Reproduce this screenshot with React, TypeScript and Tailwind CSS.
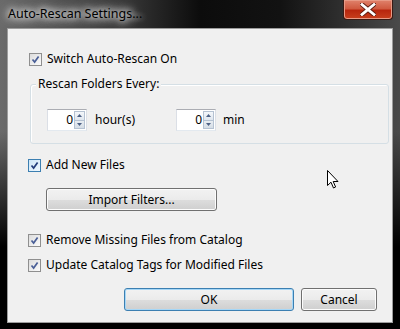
import React from 'react';

const font = { fontFamily: '"Noto Sans", "Open Sans", sans-serif' };

// Win7 style checkbox
const CheckBox: React.FC<{ hot?: boolean }> = ({ hot }) => (
    <div className={`w-[13px] h-[13px] border flex-shrink-0 flex items-center justify-center ${hot ? 'border-[#3c7fb1] bg-[linear-gradient(135deg,#cde6f7,#f0f8fe)]' : 'border-[#8f8f8f] bg-[linear-gradient(135deg,#dcdcdc,#fbfbfb)]'}`}>
        <svg width="9" height="9" viewBox="0 0 9 9">
            <path d="M1.5 4.5 L3.6 7 L7.6 1.5" fill="none" stroke={hot ? '#233d7a' : '#4a5f97'} strokeWidth="1.7" />
        </svg>
    </div>
);

const Row: React.FC<{ label: string; hot?: boolean; className?: string }> = ({ label, hot, className }) => (
    <div className={`flex items-center gap-[5px] h-[16px] ${className ?? ''}`}>
        <CheckBox hot={hot} />
        <span className="text-[12px] leading-none text-black">{label}</span>
    </div>
);

const Spinner: React.FC = () => (
    <div className="w-[40px] h-[22px] bg-white border border-[#abadb3] border-b-[#e3e9ef] border-x-[#dbdfe6] flex items-stretch">
        <span className="flex-1 text-right text-[12px] leading-[20px] pr-[1px]">0</span>
        <div className="w-[12px] flex flex-col py-[1px] pr-[1px] gap-0">
            <div className="flex-1 border border-[#b5c2d2] bg-[linear-gradient(#f4f7fa,#dfe6ee)] flex items-center justify-center">
                <svg width="5" height="3" viewBox="0 0 5 3"><path d="M0 3 L2.5 0 L5 3 Z" fill="#4d6185" /></svg>
            </div>
            <div className="flex-1 border border-[#b5c2d2] border-t-0 bg-[linear-gradient(#e8edf2,#d5dde6)] flex items-center justify-center">
                <svg width="5" height="3" viewBox="0 0 5 3"><path d="M0 0 L2.5 3 L5 0 Z" fill="#4d6185" /></svg>
            </div>
        </div>
    </div>
);

const Button: React.FC<{ label: string; w: string; def?: boolean }> = ({ label, w, def }) => (
    <div className={`${w} h-[23px] rounded-[3px] border flex items-center justify-center text-[12px] text-black ${def ? 'border-[#3c7fb1] shadow-[inset_0_0_0_1px_#a6d7f7] bg-[linear-gradient(#f2f2f2_0%,#ebebeb_50%,#dddddd_51%,#cfcfcf_100%)]' : 'border-[#707070] shadow-[inset_0_0_0_1px_#fcfcfc] bg-[linear-gradient(#f2f2f2_0%,#ebebeb_50%,#dddddd_51%,#cfcfcf_100%)]'}`}>
        {label}
    </div>
);

export default function App() {
    return (
        <div className="w-[400px] h-[329px] relative flex flex-col px-[7px] pb-[6px] bg-[linear-gradient(90deg,#6a6a6a_0%,#3a3a3a_30%,#0c0c0c_50%,#121212_70%,#4a4a4a_100%)]" style={font}>
            <div className="absolute inset-0 bg-[linear-gradient(180deg,transparent_0%,transparent_40%,#000_75%)] pointer-events-none" />
            {/* title bar */}
            <div className="h-[28px] flex items-start relative">
                <span className="mt-[6px] ml-[1px] text-[12.5px] leading-[16px] text-black [text-shadow:0_0_6px_#fff,0_0_10px_#fff,0_0_14px_#eee]">
                    Auto-Rescan Settings...
                </span>
                <div className="ml-auto w-[50px] h-[20px] rounded-b-[4px] border border-[#3a1a14] border-t-0 shadow-[inset_0_0_0_1px_#e89a86] bg-[linear-gradient(#e0826c_0%,#d05a40_45%,#b8260e_55%,#c8401e_100%)] flex items-center justify-center">
                    <svg width="16" height="13" viewBox="0 0 16 13">
                        <path d="M2 1.5 L14 11.5 M14 1.5 L2 11.5" stroke="#5a1a10" strokeWidth="4.6" strokeLinecap="square" />
                        <path d="M2 1.5 L14 11.5 M14 1.5 L2 11.5" stroke="#fff" strokeWidth="2.8" strokeLinecap="square" />
                    </svg>
                </div>
            </div>

            {/* client area */}
            <div className="flex-1 relative border border-[#9c9c9c] bg-[#f0f0f0] pl-[20px] flex flex-col">
                <Row label="Switch Auto-Rescan On" className="mt-[22px] ml-[1px]" />

                <div className="relative mt-[17px] ml-[2px] w-[359px] h-[60px] rounded-[3px] border border-[#d5dfe5] shadow-[inset_1px_1px_0_#fff] pl-[16px] pt-[24px]">
                    <span className="absolute left-[5px] top-[-9px] px-[2px] bg-[#f0f0f0] text-[12px] leading-[16px] text-black">Rescan Folders Every:</span>
                    <div className="flex items-center">
                        <div className="w-[129px] flex items-center gap-[8px]">
                            <Spinner />
                            <span className="text-[12px] leading-none">hour(s)</span>
                        </div>
                        <div className="flex items-center gap-[7px]">
                            <Spinner />
                            <span className="text-[12px] leading-none">min</span>
                        </div>
                    </div>
                </div>

                <Row label="Add New Files" hot className="mt-[13px]" />

                <div className="mt-[15px] ml-[18px]">
                    <Button label="Import Filters..." w="w-[171px]" />
                </div>

                <Row label="Remove Missing Files from Catalog" className="mt-[21px]" />
                <Row label="Update Catalog Tags for Modified Files" className="mt-[9px]" />

                <div className="mt-[15px] flex justify-end gap-[7px] pr-[15px]">
                    <Button label="OK" w="w-[170px]" def />
                    <Button label="Cancel" w="w-[76px]" />
                </div>
            </div>

            {/* mouse cursor */}
            <svg className="absolute left-[327px] top-[170px]" width="12" height="19" viewBox="0 0 12 19">
                <path d="M0.5 0.5 L0.5 15.5 L4 12.2 L6.5 18 L8.6 17 L6.2 11.5 L11 11.5 Z" fill="#fff" stroke="#000" strokeWidth="1" />
            </svg>
        </div>
    );
}
